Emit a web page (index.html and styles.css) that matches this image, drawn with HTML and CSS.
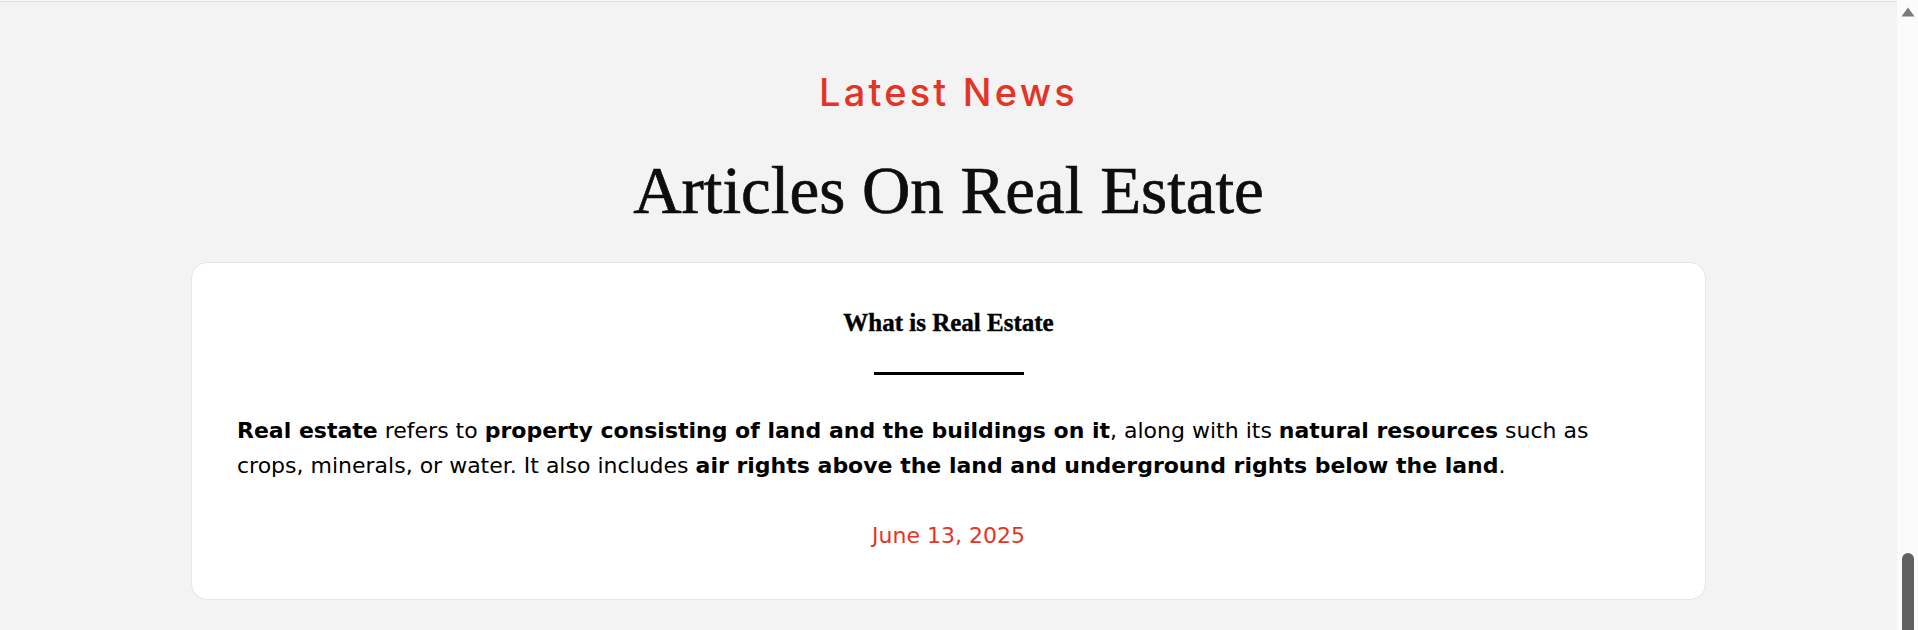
FILE: index.html
```html
<!DOCTYPE html>
<html lang="en">
<head>
<meta charset="utf-8">
<title>Latest News</title>
<link rel="stylesheet" href="styles.css">
</head>
<body>
<div class="page">
  <main class="main">
    <div class="topline"></div>
    <section class="news">
      <p class="eyebrow">Latest News</p>
      <h1 class="heading">Articles On Real Estate</h1>
      <article class="card">
        <h2 class="card-title">What is Real Estate</h2>
        <div class="divider"></div>
        <p class="card-text"><strong>Real estate</strong> refers to <strong>property consisting of land and the buildings on it</strong>, along with its <strong>natural resources</strong> such as<br>crops, minerals, or water. It also includes <strong>air rights above the land and underground rights below the land</strong>.</p>
        <p class="card-date">June 13, 2025</p>
      </article>
    </section>
  </main>
  <aside class="scrollbar">
    <svg class="scroll-arrow" width="14" height="10" viewBox="0 0 14 10"><path d="M7 0.5 L13.5 9.5 L0.5 9.5 Z" fill="#7a7a7a"/></svg>
    <div class="scroll-thumb"></div>
  </aside>
</div>
</body>
</html>
```
FILE: styles.css
```css
html, body {
  margin: 0;
  padding: 0;
}
body {
  background: #f3f3f3;
  font-family: "DejaVu Sans", "Inter", sans-serif;
  color: #000;
}
.page {
  display: flex;
  height: 630px;
  overflow: hidden;
}
.main {
  flex: 1;
  min-width: 0;
}
.topline {
  height: 1px;
  border-top: 1px solid #fafafa;
  background: #dddddd;
}
.news {
  display: flex;
  flex-direction: column;
  align-items: center;
  padding-top: 68px;
}
.eyebrow {
  margin: 0;
  font-family: "Inter", sans-serif;
  font-weight: 500;
  font-size: 38px;
  line-height: 44px;
  letter-spacing: 3.2px;
  color: #e43426;
}
.heading {
  margin: 36px 0 0;
  font-family: "Liberation Serif", serif;
  font-weight: 400;
  font-size: 67px;
  line-height: 80px;
  color: #0d0d0d;
  -webkit-text-stroke: 0.7px #0d0d0d;
}
.card {
  box-sizing: border-box;
  width: 1515px;
  margin-top: 32px;
  background: #fff;
  border: 1px solid #e6e6e6;
  border-radius: 16px;
  padding: 44px 45px 0;
  height: 338px;
  text-align: center;
}
.card-title {
  margin: 0;
  font-family: "Liberation Serif", serif;
  font-weight: 700;
  font-size: 25px;
  line-height: 32px;
  -webkit-text-stroke: 0.4px #000;
}
.divider {
  width: 150px;
  height: 3px;
  background: #000;
  margin: 33px auto 0;
}
.card-text {
  margin: 38px 0 0;
  text-align: left;
  font-size: 22px;
  line-height: 35px;
  font-weight: 400;
}
.card-text strong {
  font-weight: 700;
}
.card-date {
  margin: 38px 0 0;
  font-size: 22px;
  line-height: 30px;
  color: #e43426;
}
.scrollbar {
  width: 21px;
  background: #fbfbfb;
  display: flex;
  flex-direction: column;
  align-items: center;
  justify-content: space-between;
}
.scroll-arrow {
  margin-top: 7px;
}
.scroll-thumb {
  width: 12px;
  height: 77px;
  background: #616161;
  border-radius: 6px 6px 0 0;
}
```
